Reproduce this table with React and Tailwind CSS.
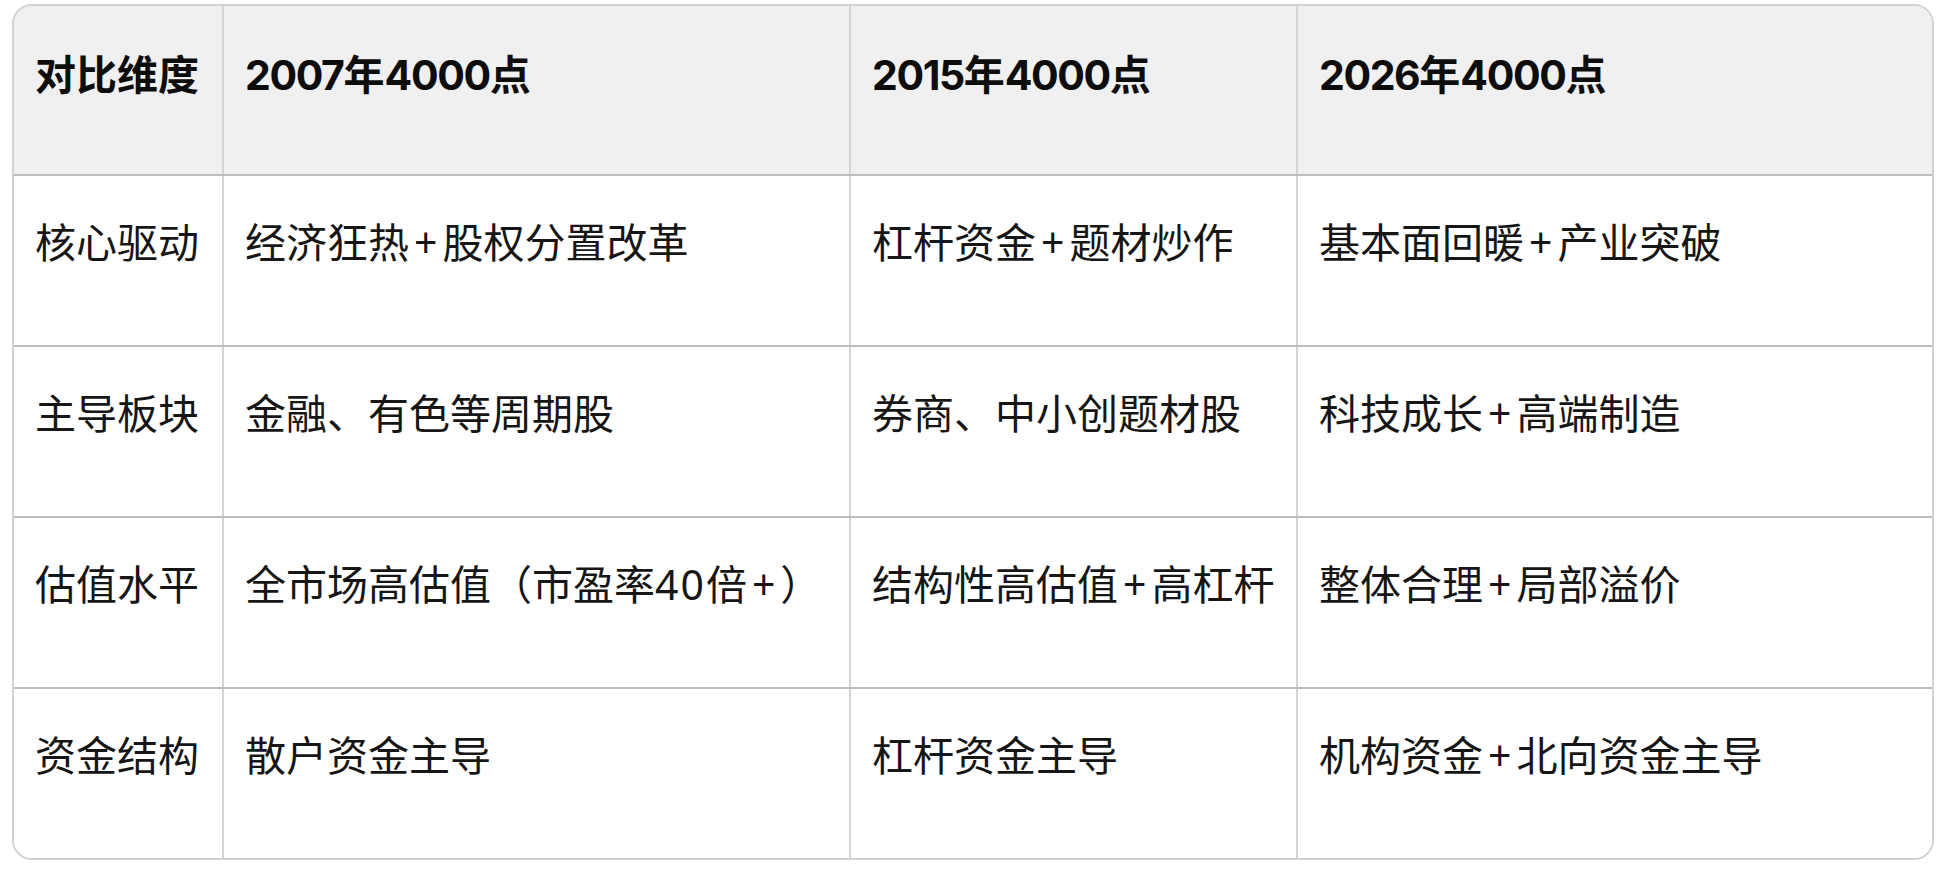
const header = ["对比维度", "2007年4000点", "2015年4000点", "2026年4000点"];

const rows = [
  ["核心驱动", "经济狂热+股权分置改革", "杠杆资金+题材炒作", "基本面回暖+产业突破"],
  ["主导板块", "金融、有色等周期股", "券商、中小创题材股", "科技成长+高端制造"],
  ["估值水平", "全市场高估值（市盈率40倍+）", "结构性高估值+高杠杆", "整体合理+局部溢价"],
  ["资金结构", "散户资金主导", "杠杆资金主导", "机构资金+北向资金主导"],
];

const cols = "grid grid-cols-[208px_627px_447px_636px]";

// split latin runs out so digits and "+" can get their own spacing
function Text({ value, head }) {
  const parts = value.split(/([0-9]+|\+)/).filter(Boolean);
  return parts.map((p, i) => {
    if (p === "+") return <span key={i} className="px-[5px]">+</span>;
    if (/^[0-9]+$/.test(p))
      return (
        <span key={i} className={head ? "font-['Inter'] tracking-[-1.4px]" : "tracking-[2px]"}>
          {p}
        </span>
      );
    return <span key={i}>{p}</span>;
  });
}

function Row({ cells, head }) {
  let cls = cols;
  if (head) cls += " h-[168px] bg-[#f0f0f0] font-bold text-[#0d0d0d]";
  else cls += " h-[171px] bg-white text-[#161616] border-t-2 border-[#bdbdbd]";
  return (
    <div className={cls}>
      {cells.map((c, i) => (
        <div
          key={i}
          className={
            "pl-[21px] text-[41px] leading-[41px] whitespace-nowrap" +
            (head ? " pt-[48px]" : " pt-[46px]") +
            (i > 0 ? " border-l-2 border-[#d4d4d4]" : "")
          }
        >
          <Text value={c} head={head} />
        </div>
      ))}
    </div>
  );
}

export default function App() {
  return (
    <div
      className="w-[1942px] h-[874px] bg-white pt-[4px] pl-[12px]"
      style={{ fontFamily: '"Noto Sans", "Noto Sans CJK SC", sans-serif' }}
    >
      <div className="w-[1922px] rounded-[20px] border-2 border-[#d2d2d2] overflow-hidden">
        <Row cells={header} head />
        {rows.map((r, i) => (
          <Row key={i} cells={r} />
        ))}
      </div>
    </div>
  );
}
